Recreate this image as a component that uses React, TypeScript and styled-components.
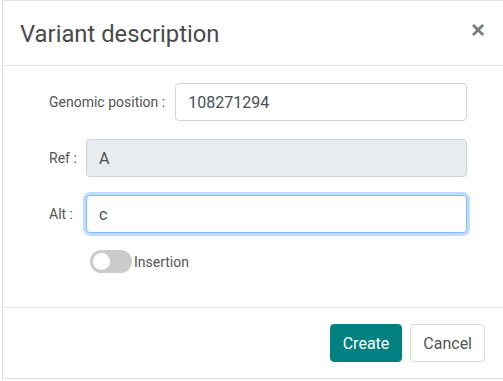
import React from "react";
import styled, { createGlobalStyle } from "styled-components";

const GlobalStyle = createGlobalStyle`
    html, body {
        margin: 0;
        padding: 0;
        background: #ffffff;
        font-family: Roboto, "Liberation Sans", sans-serif;
        overflow: hidden;
    }
`;

const App = () => {
    return (
        <>
            <GlobalStyle />
            <Page>
                <Modal>
                    <Header>
                        <Title>Variant description</Title>
                        <Close aria-label="close">×</Close>
                    </Header>
                    <Body>
                        <Row>
                            <Label>Genomic position :</Label>
                            <Input defaultValue="108271294" />
                        </Row>
                        <Row>
                            <Label width={27}>Ref :</Label>
                            <Input defaultValue="A" readOnly disabled />
                        </Row>
                        <Row>
                            <Label width={27}>Alt :</Label>
                            <Input defaultValue="c" focused />
                        </Row>
                        <SwitchRow>
                            <Switch>
                                <Knob />
                            </Switch>
                            <SwitchLabel>Insertion</SwitchLabel>
                        </SwitchRow>
                    </Body>
                    <Footer>
                        <Button primary>Create</Button>
                        <Button>Cancel</Button>
                    </Footer>
                </Modal>
            </Page>
        </>
    );
};

export default App;

const Page = styled.div`
    width: 503px;
    height: 381px;
    overflow: hidden;
    padding-left: 2px;
    box-sizing: border-box;
`;

const Modal = styled.div`
    width: 520px;
    height: 379px;
    box-sizing: border-box;
    border: 1px solid #dfe3e7;
    border-right: none;
    background: #fff;
    display: flex;
    flex-direction: column;
`;

const Header = styled.div`
    height: 65px;
    box-sizing: border-box;
    border-bottom: 1px solid #e3e6e9;
    display: flex;
    align-items: center;
    justify-content: space-between;
    padding: 0 37px 0 17px;
`;

const Title = styled.h4`
    margin: 0;
    font-size: 23.8px;
    font-weight: 400;
    color: #4a4a4a;
    padding-top: 2px;
`;

const Close = styled.span`
    font-size: 24px;
    font-weight: 700;
    color: #7a7a7a;
    line-height: 1;
    margin-top: -6px;
    font-family: "Liberation Sans", Arial, sans-serif;
`;

const Body = styled.div`
    flex: 1;
    padding: 17px 0 0 46px;
    display: flex;
    flex-direction: column;
    gap: 18px;
    border-bottom: 1px solid #e3e6e9;
`;

const Row = styled.div`
    display: flex;
    align-items: center;
    width: 418px;
    gap: 10px;
`;

const Label = styled.label<{ width?: number }>`
    font-size: 14px;
    color: #555;
    white-space: nowrap;
    flex: none;
    width: ${(p) => (p.width ? `${p.width}px` : "auto")};
`;

const Input = styled.input<{ focused?: boolean }>`
    flex: 1;
    min-width: 0;
    height: 38px;
    box-sizing: border-box;
    border: 1px solid ${(p) => (p.focused ? "#80bdff" : "#ced4da")};
    border-radius: 4px;
    padding: 0 12px;
    font-family: Roboto, "Liberation Sans", sans-serif;
    font-size: 16px;
    color: #495057;
    background: #fff;
    outline: none;
    box-shadow: ${(p) =>
        p.focused ? "0 0 0 3px rgba(0, 123, 255, 0.25)" : "none"};

    &:disabled {
        background: #e9ecef;
        color: #495057;
        opacity: 1;
    }
`;

const SwitchRow = styled.div`
    display: flex;
    align-items: center;
    padding-left: 41px;
    margin-top: -1px;
`;

const Switch = styled.div`
    width: 42px;
    height: 23px;
    border-radius: 12px;
    background: #cccccc;
    position: relative;
    margin-right: 2px;
`;

const Knob = styled.div`
    position: absolute;
    left: 3px;
    top: 3px;
    width: 17px;
    height: 17px;
    border-radius: 50%;
    background: #fff;
`;

const SwitchLabel = styled.span`
    font-size: 14px;
    color: #555;
`;

const Footer = styled.div`
    height: 70px;
    display: flex;
    align-items: center;
    justify-content: flex-end;
    gap: 8px;
    padding-right: 37px;
`;

const Button = styled.button<{ primary?: boolean }>`
    height: 38px;
    padding: 0 12px;
    border-radius: 4px;
    font-family: Roboto, "Liberation Sans", sans-serif;
    font-size: 16px;
    cursor: pointer;
    border: 1px solid ${(p) => (p.primary ? "#008080" : "#dcdcdc")};
    background: ${(p) => (p.primary ? "#008080" : "#fff")};
    color: ${(p) => (p.primary ? "#fff" : "#555")};
`;
